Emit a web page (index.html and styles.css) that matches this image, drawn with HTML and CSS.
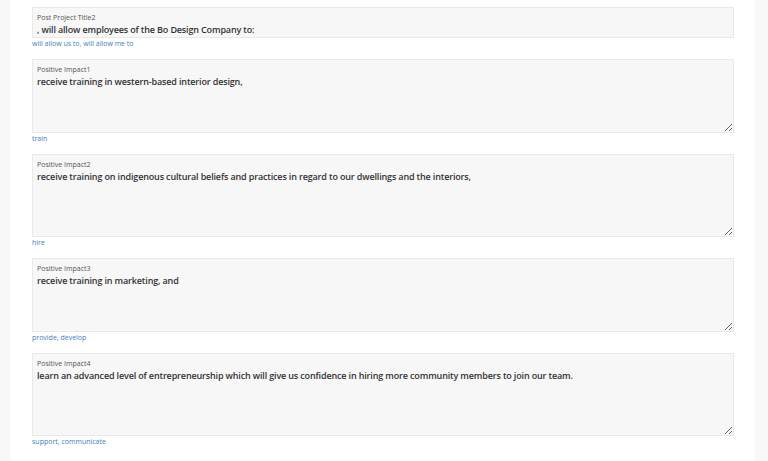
FILE: index.html
```html
<!DOCTYPE html>
<html lang="en">
<head>
    <meta charset="UTF-8">
    <meta name="viewport" content="width=device-width, initial-scale=1.0">
    <title>Post Project</title>
    <link rel="stylesheet" href="styles.css">
</head>
<body>
    <div class="sheet">
        <div class="field">
            <div class="box">
                <label class="label">Post Project Title2</label>
                <div class="value">, will allow employees of the Bo Design Company to:</div>
            </div>
            <a href="#" class="hint">will allow us to, will allow me to</a>
        </div>

        <div class="field">
            <div class="box">
                <label class="label">Positive Impact1</label>
                <textarea class="value short">receive training in western-based interior design,</textarea>
            </div>
            <a href="#" class="hint">train</a>
        </div>

        <div class="field">
            <div class="box">
                <label class="label">Positive Impact2</label>
                <textarea class="value tall">receive training on indigenous cultural beliefs and practices in regard to our dwellings and the interiors,</textarea>
            </div>
            <a href="#" class="hint">hire</a>
        </div>

        <div class="field">
            <div class="box">
                <label class="label">Positive Impact3</label>
                <textarea class="value short">receive training in marketing, and</textarea>
            </div>
            <a href="#" class="hint">provide, develop</a>
        </div>

        <div class="field">
            <div class="box">
                <label class="label">Positive Impact4</label>
                <textarea class="value tall">learn an advanced level of entrepreneurship which will give us confidence in hiring more community members to join our team.</textarea>
            </div>
            <a href="#" class="hint">support, communicate</a>
        </div>
    </div>
</body>
</html>
```

FILE: styles.css
```css
/*
reset
*/
html, body {
    margin: 0;
    padding: 0;
}
body {
    background: #f8f8f8;
    font-family: "Open Sans", "Noto Sans", sans-serif;
    color: #333;
}
/*
page
*/
.sheet {
    width: 702px;
    min-height: 454px;
    margin-left: 11px;
    padding: 7px 21px 0;
    background: #fff;
}
.field {
    margin-bottom: 10px;
}
.box {
    display: flex;
    flex-direction: column;
    background: #f7f7f7;
    border: 1px solid #e9e9e9;
    padding: 4px 0 0 4px;
}
.label {
    font-size: 7px;
    line-height: 11px;
    color: #555;
}
.value {
    font-family: inherit;
    font-size: 9px;
    font-weight: 600;
    letter-spacing: -0.15px;
    line-height: 14px;
    color: #333;
    padding: 0;
}
textarea.value {
    border: 0;
    margin: 0;
    background: transparent;
    resize: vertical;
    outline: none;
    overflow: hidden;
}
.short {
    height: 57px;
}
.tall {
    height: 66px;
}
/*
hints
*/
.hint {
    display: block;
    width: fit-content;
    font-size: 7px;
    line-height: 11px;
    color: #3d80c0;
    text-decoration: none;
}
```
